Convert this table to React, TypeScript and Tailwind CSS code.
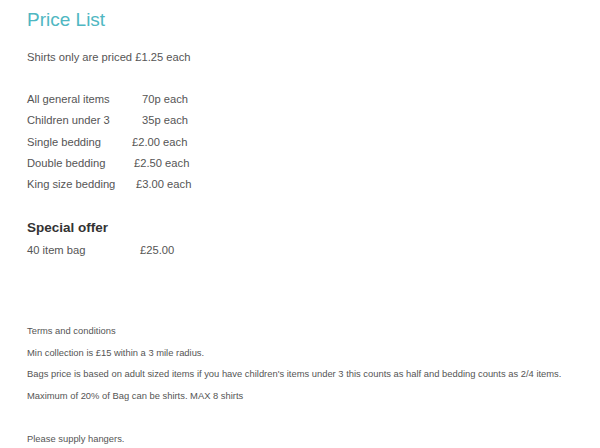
const prices = [
  { name: "All general items", price: "70p each", pad: "pl-[115px]" },
  { name: "Children under 3", price: "35p each", pad: "pl-[115px]" },
  { name: "Single bedding", price: "£2.00 each", pad: "pl-[105px]" },
  { name: "Double bedding", price: "£2.50 each", pad: "pl-[107px]" },
  { name: "King size bedding", price: "£3.00 each", pad: "pl-[109px]" },
];

const terms = [
  "Terms and conditions",
  "Min collection is £15 within a 3 mile radius.",
  "Bags price is based on adult sized items if you have children's items under 3 this counts as half and bedding counts as 2/4 items.",
  "Maximum of 20% of Bag can be shirts. MAX 8 shirts",
];

export default function App() {
  return (
    <div className="min-h-[448px] bg-white px-[27px] pt-[8px] text-[#555] font-['Liberation_Sans',Arial,sans-serif]">
      <h1 className="text-[19px] leading-[24px] text-[#4fb7c2]">Price List</h1>
      <p className="mt-[17px] text-[11.2px] leading-[16px]">Shirts only are priced £1.25 each</p>

      <div className="mt-[26px] flex flex-col gap-[0.25px]">
        {prices.map((p) => (
          <div key={p.name} className="relative h-[21px] text-[11.2px] leading-[16px]">
            <span>{p.name}</span>
            <span className={"absolute top-0 left-0 " + p.pad}>{p.price}</span>
          </div>
        ))}
      </div>

      <h2 className="mt-[22px] text-[13.5px] leading-[18px] font-bold text-[#333]">Special offer</h2>
      <div className="relative mt-[5px] h-[21px] text-[11.2px] leading-[16px]">
        <span>40 item bag</span>
        <span className="absolute top-0 left-0 pl-[113px]">£25.00</span>
      </div>

      <div className="mt-[61px] flex flex-col gap-[7.7px] text-[9.4px] leading-[14px]">
        {terms.map((t) => (
          <p key={t} className="whitespace-nowrap">{t}</p>
        ))}
        <p className="mt-[21px]">Please supply hangers.</p>
      </div>
    </div>
  );
}
